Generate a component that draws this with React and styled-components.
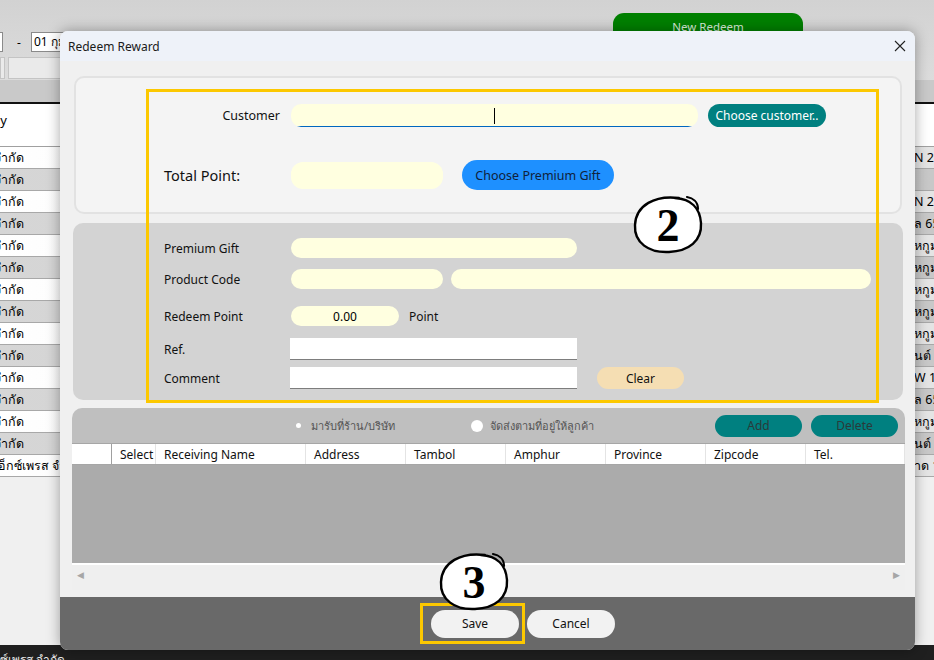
import React from 'react'
import styled, { createGlobalStyle } from 'styled-components'

const GlobalStyle = createGlobalStyle`
  body {
    margin: 0;
    font-family: "Noto Sans", "DejaVu Sans", sans-serif;
    overflow: hidden;
    background: #f0f0f0;
  }
`

const Screen = styled.div`
  position: relative;
  width: 934px;
  height: 660px;
  overflow: hidden;
  display: flex;
  flex-direction: column;
  background: #f0f0f0;
`

/* ---------- background window ---------- */

const TopArea = styled.div`
  height: 80px;
  background: linear-gradient(#d2d2d2, #dcdcdc);
  display: flex;
  flex-direction: column;
`
const ButtonLine = styled.div`
  height: 31px;
  display: flex;
  align-items: flex-end;
  padding-left: 613px;
`
const NewRedeem = styled.div`
  width: 190px;
  height: 12px;
  padding-top: 6px;
  background: #008000;
  border-radius: 11px 11px 0 0;
  color: #d8ecd8;
  font-size: 11.5px;
  text-align: center;
`
const DateLine = styled.div`
  height: 22px;
  display: flex;
  align-items: center;
  font-size: 12px;
`
const DateBox = styled.div`
  height: 20px;
  width: ${p => p.$w}px;
  margin-left: ${p => p.$ml || 0}px;
  background: #fff;
  border: 1px solid #8a8a8a;
  box-sizing: border-box;
  padding-left: 2px;
  line-height: 18px;
  white-space: nowrap;
  overflow: hidden;
`
const Dash = styled.span`
  margin-left: 14px;
`
const TabLine = styled.div`
  height: 22px;
  margin-top: 4px;
  display: flex;
  gap: 3px;
`
const TabBox = styled.div`
  width: ${p => p.$w}px;
  background: #eaeaea;
  border: 1px solid #c4c4c4;
`
const HeadRow = styled.div`
  height: 22px;
  background: #c9c9c9;
  border-bottom: 2px solid #111;
`
const TitleRow = styled.div`
  height: 43px;
  background: #fff;
  border-bottom: 1px solid #a0a0a0;
  font-size: 13px;
  display: flex;
  padding-top: 6px;
  box-sizing: border-box;
`
const DataRow = styled.div`
  height: 22px;
  display: flex;
  font-size: 12.5px;
  border-bottom: 1px solid #a8a8a8;
  box-sizing: border-box;
  background: ${p => (p.$odd ? 'linear-gradient(90deg, #d6d6d6, #c8c8c8)' : 'linear-gradient(90deg, #ffffff, #e4e4e4)')};
`
const LeftCell = styled.div`
  width: 60px;
  overflow: hidden;
  white-space: nowrap;
  display: flex;
  justify-content: ${p => (p.$start ? 'flex-start' : 'flex-end')};
  padding-right: ${p => (p.$start ? 0 : p.$pr || 36)}px;
  box-sizing: border-box;
  line-height: 21px;
`
const StartText = styled.span`
  margin-left: -${p => p.$shift}px;
`
const MidCell = styled.div`
  flex: 1;
`
const RightCell = styled.div`
  width: 20px;
  overflow: hidden;
  white-space: nowrap;
  line-height: 21px;
  padding-left: 2px;
`
const Filler = styled.div`
  flex: 1;
  background: #f0f0f0;
`
const BottomBar = styled.div`
  height: 15px;
  background: #1f1f1f;
  color: #e8e8e8;
  font-size: 12px;
  padding-top: 5px;
  box-sizing: border-box;
  white-space: nowrap;
  overflow: hidden;
`

/* ---------- dialog ---------- */

const Dialog = styled.div`
  position: absolute;
  left: 60px;
  top: 31px;
  width: 855px;
  height: 619px;
  border-radius: 8px;
  overflow: hidden;
  background: #f0f0f0;
  box-shadow: 0 0 14px rgba(0, 0, 0, 0.35);
  display: flex;
  flex-direction: column;
`
const TitleBar = styled.div`
  height: 30px;
  flex-shrink: 0;
  background: #eef2f9;
  display: flex;
  align-items: center;
  justify-content: space-between;
  padding: 0 9px 0 8px;
  font-size: 12px;
  color: #1a1a1a;
`
const Body = styled.div`
  flex: 1;
  display: flex;
  flex-direction: column;
  padding-top: 15px;
`
const CustomerPanel = styled.div`
  height: 138px;
  flex-shrink: 0;
  margin: 0 13px 0 14px;
  box-sizing: border-box;
  border: 2px solid #e2e2e2;
  border-radius: 10px;
  background: #f4f4f4;
  padding: 26px 0 0 88px;
  display: flex;
  flex-direction: column;
  gap: 33px;
`
const Line = styled.div`
  display: flex;
  align-items: center;
  flex-shrink: 0;
  height: ${p => p.$h}px;
  margin-top: ${p => p.$mt || 0}px;
`
const Label = styled.div`
  width: ${p => p.$w}px;
  text-align: ${p => p.$align || 'left'};
  font-size: ${p => p.$size || 12}px;
  color: #111;
  flex-shrink: 0;
`
const YellowField = styled.div`
  width: ${p => p.$w}px;
  height: ${p => p.$h}px;
  margin-left: ${p => p.$ml || 0}px;
  background: #ffffe0;
  border-radius: ${p => p.$r || 10}px;
  font-size: 12px;
  display: flex;
  align-items: center;
  justify-content: center;
  flex-shrink: 0;
`
const CustomerField = styled(YellowField)`
  background:
    linear-gradient(#0067c0, #0067c0) no-repeat center bottom / calc(100% - 12px) 1px,
    #ffffe0;
`
const Caret = styled.div`
  width: 1px;
  height: 16px;
  background: #000;
`
const PillButton = styled.div`
  width: ${p => p.$w}px;
  height: ${p => p.$h}px;
  margin-left: ${p => p.$ml || 0}px;
  border-radius: ${p => p.$h / 2}px;
  background: ${p => p.$bg};
  color: ${p => p.$color || '#111'};
  font-size: ${p => p.$size || 12}px;
  display: flex;
  align-items: center;
  justify-content: center;
  flex-shrink: 0;
`

const GiftPanel = styled.div`
  height: 177px;
  flex-shrink: 0;
  margin: 9px 12px 0 13px;
  box-sizing: border-box;
  background: #d3d3d3;
  border-radius: 10px;
  padding: 15px 0 0 91px;
  display: flex;
  flex-direction: column;
`
const WhiteField = styled.div`
  width: 287px;
  height: 22px;
  margin-left: -1px;
  background: #fff;
  border-bottom: 1px solid #7d7d7d;
  box-sizing: border-box;
  flex-shrink: 0;
`
const Unit = styled.span`
  margin-left: 10px;
  font-size: 12px;
  color: #111;
`

const AddressPanel = styled.div`
  height: 182px;
  flex-shrink: 0;
  margin: 8px 10px 0 12px;
  display: flex;
  flex-direction: column;
  border-radius: 10px 10px 0 0;
  overflow: hidden;
`
const RadioBar = styled.div`
  height: 35px;
  flex-shrink: 0;
  background: #bfbfbf;
  display: flex;
  align-items: center;
  padding: 0 7px 0 224px;
  font-size: 11px;
  color: #555;
`
const RadioOption = styled.div`
  display: flex;
  align-items: center;
  width: ${p => p.$w}px;
  gap: ${p => p.$gap}px;
`
const RadioDot = styled.div`
  width: ${p => p.$d}px;
  height: ${p => p.$d}px;
  margin-left: ${p => p.$ml || 0}px;
  border-radius: 50%;
  background: #fff;
`
const ActionGroup = styled.div`
  margin-left: auto;
  display: flex;
  gap: 9px;
`
const Grid = styled.div`
  display: grid;
  flex-shrink: 0;
  grid-template-columns: 40px 44px 150px 100px 100px 100px 100px 100px 1fr;
  height: 22px;
  background: #fff;
  border-top: 1px solid #a6a6a6;
  border-bottom: 1px solid #a6a6a6;
  box-sizing: border-box;
`
const HeadCell = styled.div`
  font-size: 12px;
  color: #111;
  padding-left: ${p => (p.$first ? 0 : 8)}px;
  line-height: 21px;
  border-right: 1px solid ${p => (p.$first ? '#a0a0a0' : '#e4e4e4')};
  white-space: nowrap;
  overflow: hidden;
`
const GridBody = styled.div`
  height: 98px;
  flex-shrink: 0;
  background: #ababab;
  border-bottom: 2px solid #fff;
`
const ScrollTrack = styled.div`
  flex: 1;
  background: #efefef;
  display: flex;
  justify-content: space-between;
  align-items: flex-start;
  padding: 3px 5px 0 5px;
  color: #a6a6a6;
  font-size: 9px;
`

const Footer = styled.div`
  margin-top: auto;
  height: 53px;
  flex-shrink: 0;
  background: #696969;
  display: flex;
  align-items: center;
  padding-left: 371px;
  gap: 8px;
`
const FooterButton = styled.div`
  width: 88px;
  height: 28px;
  border-radius: 14px;
  background: #f2f2f2;
  font-size: 12px;
  color: #111;
  display: flex;
  align-items: center;
  justify-content: center;
`

/* ---------- annotations ---------- */

const Highlight = styled.div`
  position: absolute;
  left: ${p => p.$x}px;
  top: ${p => p.$y}px;
  width: ${p => p.$w}px;
  height: ${p => p.$h}px;
  border: 3px solid #fcc800;
  box-sizing: border-box;
  pointer-events: none;
`
const Marker = styled.svg`
  position: absolute;
  left: ${p => p.$x}px;
  top: ${p => p.$y}px;
`

const HandNumber = ({ x, y, n }) => (
  <Marker $x={x} $y={y} width="76" height="64" viewBox="0 0 76 64">
    <path
      d="M48 5 C24 2 5 12 4 32 C3 50 18 60 38 59 C58 58 71 48 70 30 C69 15 60 6 44 5"
      fill="#fff"
      stroke="#000"
      strokeWidth="2.4"
      strokeLinecap="round"
    />
    <path d="M56 4 C62 5 67 9 67 16" fill="none" stroke="#000" strokeWidth="2.2" strokeLinecap="round" />
    <text
      x="37"
      y="48"
      textAnchor="middle"
      fontFamily="Liberation Serif, serif"
      fontWeight="bold"
      fontSize="46"
      fill="#000"
    >
      {n}
    </text>
  </Marker>
)

const CloseIcon = () => (
  <svg width="12" height="12" viewBox="0 0 12 12">
    <path d="M1 1 L11 11 M11 1 L1 11" stroke="#222" strokeWidth="1.1" />
  </svg>
)

const rightTexts = ['N 2 อ', '', 'N 2 อ', 'ล 65', 'หกูม', 'หกูม', 'หกูม', 'หกูม', 'หกูม', 'นต์', 'W 1', 'ล 65', 'หกูม', 'นต์', 'าด 1']

const columns = ['', 'Select', 'Receiving Name', 'Address', 'Tambol', 'Amphur', 'Province', 'Zipcode', 'Tel.']

export default function App() {
  return (
    <>
      <GlobalStyle />
      <Screen>
        <TopArea>
          <ButtonLine>
            <NewRedeem>New Redeem</NewRedeem>
          </ButtonLine>
          <DateLine>
            <DateBox $w={4} $ml={-1} />
            <Dash>-</Dash>
            <DateBox $w={60} $ml={10}>01 กุมภาพันธ์</DateBox>
          </DateLine>
          <TabLine>
            <TabBox $w={3} />
            <TabBox $w={60} />
          </TabLine>
        </TopArea>
        <HeadRow />
        <TitleRow>
          <LeftCell $pr={53}>Company</LeftCell>
        </TitleRow>
        {rightTexts.map((r, i) => (
          <DataRow key={i} $odd={i % 2 === 1}>
            {i === rightTexts.length - 1 ? (
              <LeftCell $start>
                <StartText $shift={14}>ดีเอ็กซ์เพรส จำกัด</StartText>
              </LeftCell>
            ) : (
              <LeftCell>บริษัท จำกัด</LeftCell>
            )}
            <MidCell />
            <RightCell>{r}</RightCell>
          </DataRow>
        ))}
        <Filler />
        <BottomBar>ซ์เพรส จำกัด</BottomBar>

        <Dialog>
          <TitleBar>
            <span>Redeem Reward</span>
            <CloseIcon />
          </TitleBar>
          <Body>
            <CustomerPanel>
              <Line $h={23}>
                <Label $w={116} $align="right" $size={12.5}>Customer</Label>
                <CustomerField $w={407} $h={23} $ml={11}>
                  <Caret />
                </CustomerField>
                <PillButton $w={118} $h={23} $ml={10} $bg="#008080" $color="#fff">
                  Choose customer..
                </PillButton>
              </Line>
              <Line $h={30}>
                <Label $w={116} $size={14.5}>Total Point:</Label>
                <YellowField $w={152} $h={27} $ml={11} $r={12} />
                <PillButton $w={152} $h={30} $ml={19} $bg="#1e90ff" $color="#10213a" $size={12.5}>
                  Choose Premium Gift
                </PillButton>
              </Line>
            </CustomerPanel>

            <GiftPanel>
              <Line $h={20}>
                <Label $w={127}>Premium Gift</Label>
                <YellowField $w={286} $h={20} />
              </Line>
              <Line $h={20} $mt={11}>
                <Label $w={127}>Product Code</Label>
                <YellowField $w={152} $h={20} />
                <YellowField $w={420} $h={20} $ml={8} />
              </Line>
              <Line $h={20} $mt={17}>
                <Label $w={127}>Redeem Point</Label>
                <YellowField $w={108} $h={20}>0.00</YellowField>
                <Unit>Point</Unit>
              </Line>
              <Line $h={22} $mt={12}>
                <Label $w={127}>Ref.</Label>
                <WhiteField />
              </Line>
              <Line $h={22} $mt={7}>
                <Label $w={127}>Comment</Label>
                <WhiteField />
                <PillButton $w={87} $h={22} $ml={20} $bg="#f5deb3">Clear</PillButton>
              </Line>
            </GiftPanel>

            <AddressPanel>
              <RadioBar>
                <RadioOption $w={175} $gap={10}>
                  <RadioDot $d={5} />
                  <span>มารับที่ร้าน/บริษัท</span>
                </RadioOption>
                <RadioOption $w={200} $gap={7}>
                  <RadioDot $d={12} />
                  <span>จัดส่งตามที่อยู่ให้ลูกค้า</span>
                </RadioOption>
                <ActionGroup>
                  <PillButton $w={87} $h={22} $bg="#008080" $color="#2a3a3a">Add</PillButton>
                  <PillButton $w={87} $h={22} $bg="#008080" $color="#2a3a3a">Delete</PillButton>
                </ActionGroup>
              </RadioBar>
              <Grid>
                {columns.map((c, i) => (
                  <HeadCell key={i} $first={i === 0}>{c}</HeadCell>
                ))}
              </Grid>
              <GridBody />
              <ScrollTrack>
                <span>◀</span>
                <span>▶</span>
              </ScrollTrack>
            </AddressPanel>

            <Footer>
              <FooterButton>Save</FooterButton>
              <FooterButton>Cancel</FooterButton>
            </Footer>
          </Body>
        </Dialog>

        <Highlight $x={146} $y={89} $w={733} $h={314} />
        <Highlight $x={420} $y={603} $w={105} $h={41} />
        <HandNumber x={631} y={193} n="2" />
        <HandNumber x={437} y={550} n="3" />
      </Screen>
    </>
  )
}
